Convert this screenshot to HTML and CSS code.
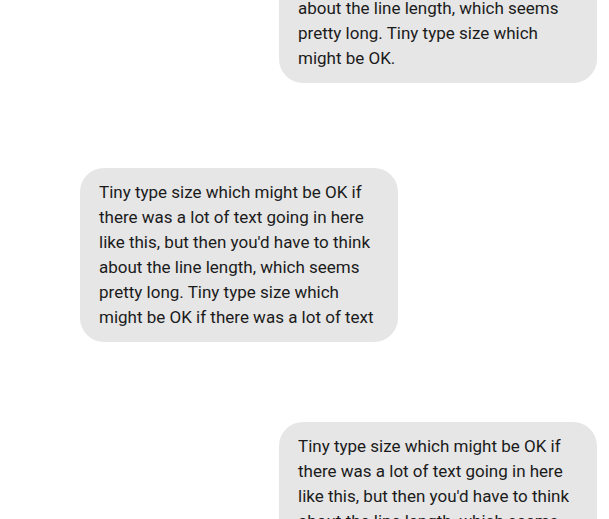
FILE: index.html
```html
<!DOCTYPE html>
<html lang="en">
<head>
<meta charset="utf-8">
<title>Chat</title>
<link rel="stylesheet" href="styles.css">
</head>
<body>
<main class="thread">
  <div class="bubble bubble--out bubble--first">Tiny type size which might be OK if there was a lot of text going in here like this, but then you'd have to think about the line length, which seems pretty long. Tiny type size which might be OK.</div>
  <div class="bubble bubble--in">Tiny type size which might be OK if there was a lot of text going in here like this, but then you'd have to think about the line length, which seems pretty long. Tiny type size which might be OK if there was a lot of text</div>
  <div class="bubble bubble--out bubble--third">Tiny type size which might be OK if there was a lot of text going in here like this, but then you'd have to think about the line length, which seems pretty long. Tiny type size which might be OK.</div>
</main>
</body>
</html>
```
FILE: styles.css
```css
html, body {
  margin: 0;
  padding: 0;
  background: #ffffff;
  overflow: hidden;
}
.thread {
  display: flex;
  flex-direction: column;
  padding: 0 12px 0 80px;
  margin-top: -91px;
  font-family: Roboto, "Liberation Sans", sans-serif;
  font-size: 17px;
  line-height: 25px;
  color: #1b1b1b;
}
.bubble {
  box-sizing: border-box;
  width: 318px;
  padding: 12px 19px;
  background: #e6e6e6;
  border-radius: 24px;
}
.bubble--out {
  align-self: flex-end;
}
.bubble--in {
  align-self: flex-start;
  margin-top: 85px;
}
.bubble--third {
  margin-top: 80px;
}
```
